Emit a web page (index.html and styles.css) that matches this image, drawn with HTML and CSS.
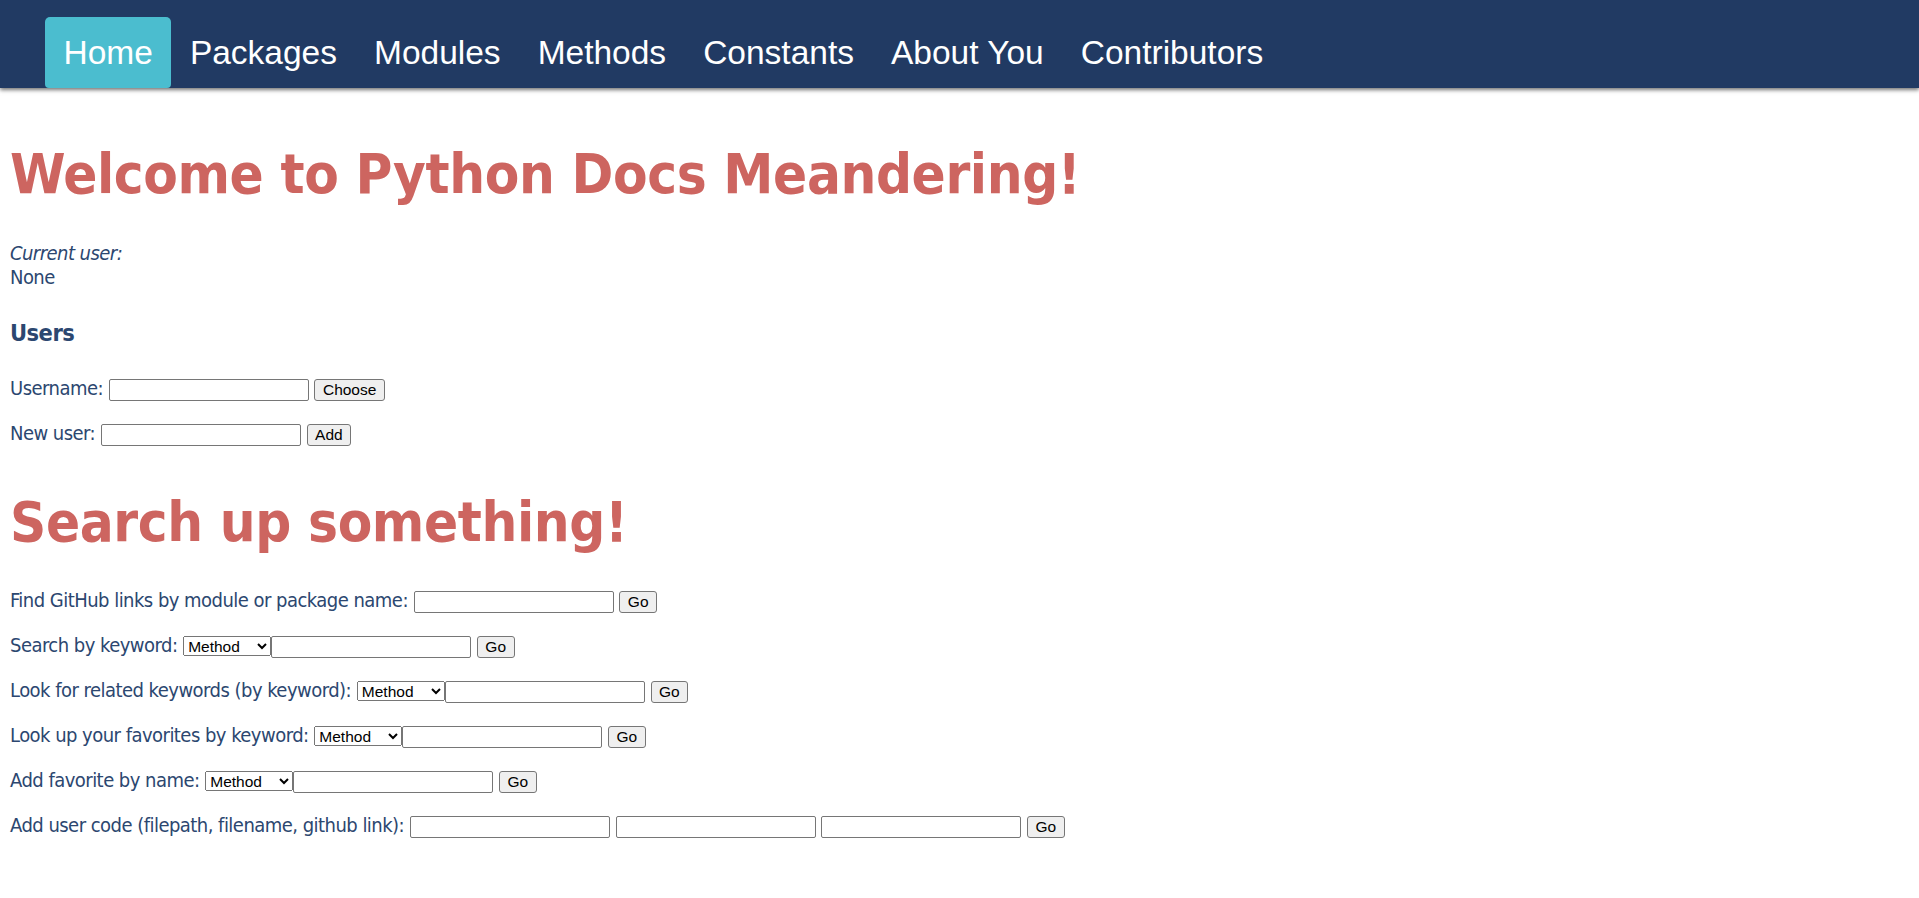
FILE: index.html
```html
<!DOCTYPE html>
<html lang="en">
<head>
<meta charset="utf-8">
<title>Python Docs Meandering</title>
<link rel="stylesheet" href="styles.css">
</head>
<body>
<nav class="topnav">
  <a class="nav-item active" href="#">Home</a>
  <a class="nav-item" href="#">Packages</a>
  <a class="nav-item" href="#">Modules</a>
  <a class="nav-item" href="#">Methods</a>
  <a class="nav-item" href="#">Constants</a>
  <a class="nav-item" href="#">About You</a>
  <a class="nav-item" href="#">Contributors</a>
</nav>
<main class="content">
  <h1 class="title title-first">Welcome to Python Docs Meandering!</h1>
  <p class="current"><em>Current user:</em><br>None</p>
  <h3 class="subhead">Users</h3>
  <form class="row row-first"><span class="label">Username:</span> <input type="text"> <button type="button">Choose</button></form>
  <form class="row"><span class="label">New user:</span> <input type="text"> <button type="button">Add</button></form>
  <h1 class="title title-second">Search up something!</h1>
  <form class="row row-first"><span class="label">Find GitHub links by module or package name:</span> <input type="text"> <button type="button">Go</button></form>
  <form class="row"><span class="label">Search by keyword:</span> <select><option>Method</option><option>Module</option><option>Package</option><option>Constant</option></select><input type="text"> <button type="button">Go</button></form>
  <form class="row"><span class="label">Look for related keywords (by keyword):</span> <select><option>Method</option><option>Module</option><option>Package</option><option>Constant</option></select><input type="text"> <button type="button">Go</button></form>
  <form class="row"><span class="label">Look up your favorites by keyword:</span> <select><option>Method</option><option>Module</option><option>Package</option><option>Constant</option></select><input type="text"> <button type="button">Go</button></form>
  <form class="row"><span class="label">Add favorite by name:</span> <select><option>Method</option><option>Module</option><option>Package</option><option>Constant</option></select><input type="text"> <button type="button">Go</button></form>
  <form class="row"><span class="label">Add user code (filepath, filename, github link):</span> <input type="text"> <input type="text"> <input type="text"> <button type="button">Go</button></form>
</main>
</body>
</html>
```
FILE: styles.css
```css
html, body {
  margin: 0;
  padding: 0;
  background: #ffffff;
}
body {
  font-family: "DejaVu Sans Condensed", "DejaVu Sans", sans-serif;
  font-size: 20px;
  color: #2c4770;
}
.topnav {
  display: flex;
  align-items: stretch;
  height: 88px;
  box-sizing: border-box;
  padding: 17px 0 0 45px;
  background: #213a63;
  box-shadow: 0 2px 4px rgba(0, 0, 0, 0.55);
}
.nav-item {
  display: block;
  padding: 0 18.5px;
  height: 71px;
  line-height: 71px;
  font-family: "Liberation Sans", Arial, sans-serif;
  font-size: 33.5px;
  color: #ffffff;
  text-decoration: none;
  border-radius: 5px 5px 4px 4px;
}
.nav-item.active {
  background: #4bbdcf;
}
.content {
  padding: 0 10px;
}
.title {
  font-size: 56px;
  line-height: 68px;
  font-weight: bold;
  letter-spacing: -0.4px;
  color: #cd6560;
  margin: 0;
}
.title-first {
  margin-top: 52px;
  margin-bottom: 33px;
}
.title-second {
  margin-top: 42.6px;
  margin-bottom: 32.2px;
}
.current {
  margin: 0;
  line-height: 24px;
  letter-spacing: -0.55px;
}
.current em {
  font-style: italic;
}
.subhead {
  font-size: 23.4px;
  line-height: 28px;
  letter-spacing: -0.5px;
  margin: 30px 0 28.6px;
}
.row {
  margin: 20px 0 0;
  line-height: 24.6px;
  white-space: nowrap;
}
.row-first {
  margin-top: 0;
}
.label {
  letter-spacing: -0.53px;
}
.row input[type="text"] {
  box-sizing: border-box;
  width: 200px;
  height: 22px;
  padding: 1px 2px;
  border: 1px solid #767676;
  border-radius: 2px;
  background: #ffffff;
  font-family: "Liberation Sans", Arial, sans-serif;
  font-size: 16.7px;
  vertical-align: baseline;
}
.row button {
  box-sizing: border-box;
  height: 22px;
  padding: 0 7.5px;
  border: 1px solid #767676;
  border-radius: 3px;
  background: #efefef;
  color: #000000;
  font-family: "Liberation Sans", Arial, sans-serif;
  font-size: 15.5px;
}
.row select {
  box-sizing: border-box;
  width: 88px;
  height: 20px;
  font-family: "Liberation Sans", Arial, sans-serif;
  font-size: 15.5px;
  color: #000000;
}
```
